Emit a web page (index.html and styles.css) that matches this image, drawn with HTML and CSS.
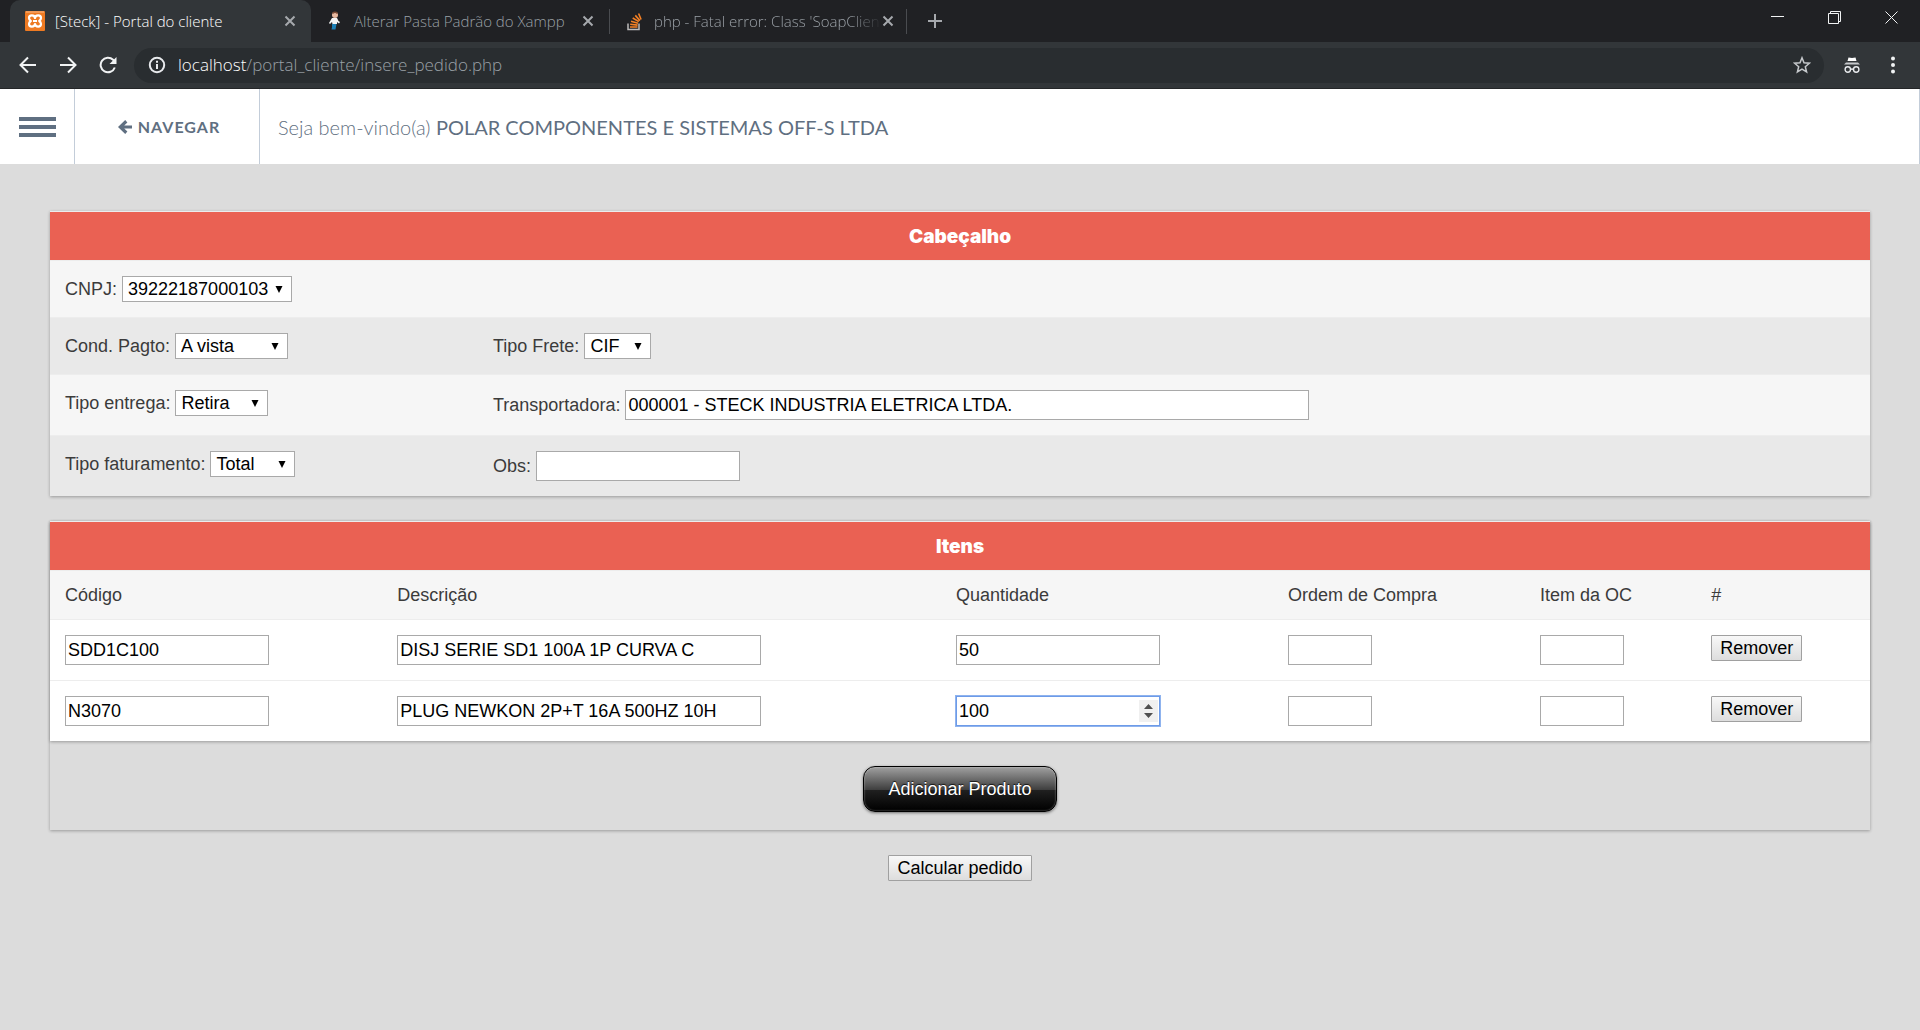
FILE: index.html
```html
<!DOCTYPE html>
<html lang="pt-BR">
<head>
<meta charset="utf-8">
<meta name="viewport" content="width=device-width, initial-scale=1">
<title>[Steck] - Portal do cliente</title>
<link rel="stylesheet" href="styles.css">
</head>
<body>
<div class="browser">
  <div class="tabstrip">
    <div class="tab tab-active">
      <svg class="favicon" viewBox="0 0 20 20"><rect width="20" height="20" rx="1" fill="#ee7a22"/><path d="M1 1h18" stroke="#f7b98a"/><path d="M10 7C9.500 3.500 4 3.700 4 7c0 1.500.8 2.300 1.800 3C4.800 10.700 4 11.500 4 13c0 3.300 5.500 3.500 6 0 .5 3.500 6 3.300 6 0 0-1.500-.8-2.300-1.800-3 1-.7 1.800-1.500 1.800-3 0-3.300-5.500-3.500-6 0zM8 10h4" fill="none" stroke="#fff" stroke-width="2.200" stroke-linejoin="round"/></svg>
      <span class="tab-title">[Steck] - Portal do cliente</span>
      <button class="tab-close" aria-label="Fechar guia"><svg width="12" height="12" viewBox="0 0 12 12"><path d="M1.500 1.500l9 9m0-9l-9 9"/></svg></button>
    </div>
    <div class="tab">
      <svg class="favicon" viewBox="0 0 20 20"><circle cx="11" cy="4" r="3" fill="#e8b9a0"/><path d="M8.500 2.500Q11 0 13.500 2.500" stroke="#7a4a35" stroke-width="1.500" fill="none"/><path d="M8 7h5l1.500 3 1.500 1-1 1.500-2-1.500v2H8.500L8 11l-2 2-1-1z" fill="#f4f4f4"/><path d="M8 13h4.500l-1 5.500H7.500l.5-2z" fill="#1c7fb5"/></svg>
      <span class="tab-title">Alterar Pasta Padrão do Xampp</span>
      <button class="tab-close" aria-label="Fechar guia"><svg width="12" height="12" viewBox="0 0 12 12"><path d="M1.500 1.500l9 9m0-9l-9 9"/></svg></button>
    </div>
    <div class="tab tab-last">
      <svg class="favicon" viewBox="0 0 20 20"><path d="M4 12.500v6h11v-6" fill="none" stroke="#bcbbbb" stroke-width="1.500"/><path d="M6 16h7.500M6.200 13.200l7.400.9M7 10.200l7 2.100M8.700 7l6.100 3.600M11.300 4.400l4.600 5.200M14.600 2.500l2.500 6" stroke="#f48024" stroke-width="1.600"/></svg>
      <span class="tab-title">php - Fatal error: Class 'SoapClien</span>
      <button class="tab-close" aria-label="Fechar guia"><svg width="12" height="12" viewBox="0 0 12 12"><path d="M1.500 1.500l9 9m0-9l-9 9"/></svg></button>
    </div>
    <button class="tab-new" aria-label="Nova guia"><svg width="16" height="16" viewBox="0 0 16 16"><path d="M8 1v14M1 8h14"/></svg></button>
    <div class="window-controls">
      <button aria-label="Minimizar"><svg width="14" height="14" viewBox="0 0 14 14"><path d="M0 5.500h13"/></svg></button>
      <button aria-label="Restaurar"><svg width="14" height="14" viewBox="0 0 14 14"><path d="M.5 2.500h10v10H.5zM2.500 2.500v-2h10v10h-2"/></svg></button>
      <button aria-label="Fechar"><svg width="14" height="14" viewBox="0 0 14 14"><path d="M.5.500l12 12m0-12l-12 12"/></svg></button>
    </div>
  </div>
  <div class="toolbar">
    <div class="nav-buttons">
      <button aria-label="Voltar"><svg width="18" height="18" viewBox="0 0 18 18"><path d="M17 9H2m7-7.500L1.500 9 9 16.500"/></svg></button>
      <button aria-label="Avançar"><svg width="18" height="18" viewBox="0 0 18 18"><path d="M1 9h15M9 1.500L16.500 9 9 16.500"/></svg></button>
      <button aria-label="Recarregar"><svg width="18" height="18" viewBox="0 0 18 18"><path d="M15.800 11.500a7.300 7.300 0 1 1-1.700-7.700L16 5.700"/><path class="solid" d="M17.500 1v7h-7z"/></svg></button>
    </div>
    <div class="omnibox">
      <svg class="info" width="18" height="18" viewBox="0 0 18 18"><circle cx="9" cy="9" r="7.200" fill="none" stroke="#e8eaed" stroke-width="2"/><path d="M9 8v5M9 4.800v2" stroke="#e8eaed" stroke-width="2"/></svg>
      <span class="url"><span class="host">localhost</span>/portal_cliente/insere_pedido.php</span>
      <button class="star" aria-label="Favoritos"><svg width="18" height="18" viewBox="0 0 18 18"><path d="M9 1.800l2 5 5.400.4-4.100 3.500 1.300 5.300L9 13.200 4.400 16l1.300-5.300L1.600 7.200 7 6.800z"/></svg></button>
    </div>
    <svg class="incognito" width="18" height="18" viewBox="0 0 18 18"><path d="M5.500 1.500l3.500.6 3.500-.6 1 3.500h-9z" fill="#fff"/><path d="M3 6.500h12l2 2H1z" fill="#c5c8cb"/><g fill="none" stroke="#e8eaed" stroke-width="1.400"><circle cx="4.800" cy="13.500" r="2.700"/><circle cx="13.200" cy="13.500" r="2.700"/><path d="M7.500 13.500q1.500-1 3 0"/></g></svg>
    <button class="more" aria-label="Mais"><svg width="6" height="18" viewBox="0 0 6 18" fill="#f1f3f4"><circle cx="3" cy="2.500" r="2"/><circle cx="3" cy="9" r="2"/><circle cx="3" cy="15.500" r="2"/></svg></button>
  </div>
</div>

<header class="topbar">
  <button class="menu" aria-label="Menu"><span></span><span></span><span></span></button>
  <a class="back" href="#"><svg width="14" height="14" viewBox="0 0 14 14"><path d="M14 5.600v2.800H6.200l3.200 3.200L7.200 14 0 7l7.200-7 2.200 2.400-3.200 3.200z" fill="#5f6f81"/></svg>NAVEGAR</a>
  <p class="welcome">Seja bem-vindo(a) <b>POLAR COMPONENTES E SISTEMAS OFF-S LTDA</b></p>
</header>

<main>
  <form>
    <section class="panel">
      <h2>Cabeçalho</h2>
      <div class="row">
        <div class="cell"><label for="cnpj">CNPJ:</label> <select id="cnpj" class="w-cnpj"><option>39222187000103</option></select></div>
      </div>
      <div class="row">
        <div class="cell"><label for="pagto">Cond. Pagto:</label> <select id="pagto" class="w-pagto"><option>A vista</option></select></div>
        <div class="cell"><label for="frete">Tipo Frete:</label> <select id="frete" class="w-frete"><option>CIF</option></select></div>
      </div>
      <div class="row">
        <div class="cell"><label for="entrega">Tipo entrega:</label> <select id="entrega" class="w-entrega"><option>Retira</option></select></div>
        <div class="cell"><label for="transp">Transportadora:</label> <input id="transp" class="w-transp" type="text" value="000001 - STECK INDUSTRIA ELETRICA LTDA."></div>
      </div>
      <div class="row">
        <div class="cell"><label for="fat">Tipo faturamento:</label> <select id="fat" class="w-fat"><option>Total</option></select></div>
        <div class="cell"><label for="obs">Obs:</label> <input id="obs" class="w-field" type="text"></div>
      </div>
    </section>

    <section class="items">
      <div class="panel">
        <h2>Itens</h2>
        <table>
          <thead>
            <tr><th class="c-code">Código</th><th class="c-desc">Descrição</th><th class="c-qty">Quantidade</th><th class="c-order">Ordem de Compra</th><th class="c-item">Item da OC</th><th>#</th></tr>
          </thead>
          <tbody>
            <tr>
              <td><input class="w-field" type="text" aria-label="Código" value="SDD1C100"></td>
              <td><input class="w-desc" type="text" aria-label="Descrição" value="DISJ SERIE SD1 100A 1P CURVA C"></td>
              <td><input class="w-field" type="number" aria-label="Quantidade" value="50"></td>
              <td><input class="w-short" type="text" aria-label="Ordem de Compra"></td>
              <td><input class="w-short" type="text" aria-label="Item da OC"></td>
              <td><button class="plain" type="button">Remover</button></td>
            </tr>
            <tr>
              <td><input class="w-field" type="text" aria-label="Código" value="N3070"></td>
              <td><input class="w-desc" type="text" aria-label="Descrição" value="PLUG NEWKON 2P+T 16A 500HZ 10H"></td>
              <td><input class="w-field active" type="number" aria-label="Quantidade" value="100"></td>
              <td><input class="w-short" type="text" aria-label="Ordem de Compra"></td>
              <td><input class="w-short" type="text" aria-label="Item da OC"></td>
              <td><button class="plain" type="button">Remover</button></td>
            </tr>
          </tbody>
        </table>
      </div>
      <div class="add"><button class="glossy" type="button">Adicionar Produto</button></div>
    </section>

    <div class="submit"><button class="plain" type="button">Calcular pedido</button></div>
  </form>
</main>
</body>
</html>
```
FILE: styles.css
```css
* { box-sizing: border-box; }

body {
  margin: 0;
  min-height: 100vh;
  background: #dcdcdc;
  color: #3b3b3b;
  font: 18px/18px "Liberation Sans", Arial, sans-serif;
}

button, input, select { font: inherit; margin: 0; }
svg { display: block; flex: none; }

/* Browser frame */
.browser {
  background: #323639;
  border-bottom: 1px solid #242628;
  font-family: "Open Sans", "Noto Sans", sans-serif;
  font-weight: 300;
}
.browser button {
  display: flex;
  align-items: center;
  justify-content: center;
  padding: 0;
  border: 0;
  background: none;
}
.browser button path { fill: none; stroke: #f1f3f4; stroke-width: 2; }
.browser button .solid { fill: #f1f3f4; stroke: none; }

.tabstrip {
  display: flex;
  height: 42px;
  padding-left: 10px;
  background: #202124;
}
.tab {
  display: flex;
  align-items: center;
  width: 298px;
  padding: 0 15px 0 13px;
  color: #9aa0a6;
  font-size: 15px;
}
.tab-active {
  width: 301px;
  padding-left: 15px;
  border-radius: 10px 10px 0 0;
  background: #323639;
  color: #fff;
}
.tab-last { width: 300px; padding-left: 15px; position: relative; }
.tab-last::before, .tab-last::after {
  content: "";
  position: absolute;
  top: 9px;
  width: 1px;
  height: 25px;
  background: #4a4c50;
}
.tab-last::before { left: 0; }
.tab-last::after { right: 2px; }
.favicon { width: 20px; height: 20px; }
.tab-title {
  flex: 1;
  margin: 0 10px;
  white-space: nowrap;
}
.tab-last .tab-title {
  margin-right: 0;
  -webkit-mask-image: linear-gradient(to left, transparent, #000 32px);
  mask-image: linear-gradient(to left, transparent, #000 32px);
}
.browser .tab-close path, .browser .tab-new path { stroke: #a6a9ad; }
.tab-close { width: 12px; }
.tab-new { width: 52px; }
.window-controls { display: flex; margin-left: auto; height: 36px; }
.window-controls button { width: 57px; }
.browser .window-controls path { stroke-width: 1; }

.toolbar {
  display: flex;
  align-items: center;
  height: 46px;
  padding: 0 18px 0 19px;
}
.nav-buttons { display: flex; gap: 22px; margin-right: 17px; }
.omnibox {
  display: flex;
  align-items: center;
  flex: 1;
  height: 35px;
  padding: 0 13px 0 14px;
  border-radius: 18px;
  background: #292d30;
}
.url { flex: 1; margin-left: 12px; color: #9aa0a6; font-size: 17px; }
.host { color: #fff; }
.browser .star path { stroke: #c5c8cb; stroke-width: 1.5; }
.incognito { margin: 0 23px 0 19px; }
.more { width: 18px; }

/* Site header */
.topbar {
  display: flex;
  align-items: stretch;
  height: 75px;
  background: #fff;
  border-right: 1px solid #c3cdd9;
  font-family: Lato, sans-serif;
  color: #5f6f81;
}
.menu {
  display: flex;
  flex-direction: column;
  justify-content: center;
  gap: 4px;
  width: 75px;
  padding: 0 18px 0 19px;
  border: 0;
  border-right: 1px solid #c3cdd9;
  background: none;
}
.menu span { width: 37px; height: 4px; background: #5f6f81; }
.back {
  display: flex;
  align-items: center;
  justify-content: center;
  gap: 6px;
  width: 185px;
  padding-left: 4px;
  border-right: 1px solid #c3cdd9;
  color: inherit;
  font-size: 16px;
  font-weight: 700;
  letter-spacing: 1px;
  text-decoration: none;
}
.welcome { margin: 0 18px; align-self: center; font-size: 20px; font-weight: 300; line-height: 24px; }
.welcome b { font-weight: 400; }

/* Order form */
main { padding: 47px 50px; }

.panel {
  background: #f6f6f6;
  border-top: 1px solid #ececec;
  box-shadow: 0 1px 3px rgba(0, 0, 0, .3);
}
h2 {
  margin: 0;
  padding: 16px 15px 14px;
  background: #ea6153;
  color: #fff;
  font: 900 19px/18px "Arial Black", Inter, sans-serif;
  text-align: center;
}
.row {
  display: grid;
  grid-template-columns: 428px 1fr;
  border-top: 1px solid #ededed;
}
.row:nth-child(odd) { background: #e9e9e9; }
.cell { padding: 15px; }

select, input {
  border: 1px solid #a9a9a9;
  border-radius: 0;
  background: #fff;
  color: #000;
}
input { height: 30px; padding: 1px 2px; }
input[type="number"] { appearance: textfield; -moz-appearance: textfield; }
input[type="number"]::-webkit-inner-spin-button { appearance: none; -webkit-appearance: none; margin: 0; }
select {
  appearance: none;
  -webkit-appearance: none;
  height: 26px;
  padding: 0 5px;
  background: #fff url("data:image/svg+xml,%3Csvg xmlns='http://www.w3.org/2000/svg' width='8' height='8'%3E%3Cpath d='M.5 1h7L4 8z'/%3E%3C/svg%3E") no-repeat right 8px center;
}
.w-cnpj { width: 170px; }
.w-pagto { width: 113px; }
.w-frete { width: 67px; }
.w-entrega { width: 93px; }
.w-fat { width: 85px; }
.w-field { width: 204px; }
.w-desc { width: 364px; }
.w-transp { width: 684px; }
.w-short { width: 84px; }

.active {
  border-color: #6d9be8;
  outline: 1px solid #8fb3ee;
  background: #fff url("data:image/svg+xml,%3Csvg xmlns='http://www.w3.org/2000/svg' width='19' height='22'%3E%3Cpath fill='%23f0f0f0' d='M0 0h19v22H0z'/%3E%3Cpath fill='%23505050' d='M5 9l4.500-5L14 9zM5 13l4.500 5 4.500-5z'/%3E%3C/svg%3E") no-repeat right 1px center;
}

.items { margin-top: 25px; box-shadow: 0 1px 3px rgba(0, 0, 0, .3); }
table { width: 100%; border-collapse: separate; border-spacing: 0; table-layout: fixed; }
th, td { padding: 15px; text-align: left; vertical-align: top; }
th { font-weight: 400; border-top: 1px solid #ededed; }
td { background: #fff; border-top: 1px solid #ededed; }
td input, td button { display: block; }
.c-code, .c-qty { width: 18.25%; }
.c-desc { width: 30.7%; }
.c-order { width: 13.85%; }
.c-item { width: 9.4%; }

.plain {
  height: 26px;
  padding: 0 8px;
  border: 1px solid #a0a0a0;
  border-radius: 1px;
  background: linear-gradient(#f8f8f8, #dddddd);
  color: #000;
}
.add { padding: 25px 0 18px; text-align: center; }
.glossy {
  display: block;
  height: 46px;
  margin: 0 auto;
  padding: 0 24px;
  border: 1px solid #000;
  border-radius: 12px;
  background: linear-gradient(#a0a0a0, #3e3e3e 52%, #202020 52%, #000);
  box-shadow: 0 1px 3px rgba(0, 0, 0, .5), inset 0 0 2px rgba(255, 255, 255, .5);
  color: #fff;
  text-shadow: 0 -1px 1px rgba(0, 0, 0, .8);
}
.submit { margin-top: 25px; text-align: center; }
```
